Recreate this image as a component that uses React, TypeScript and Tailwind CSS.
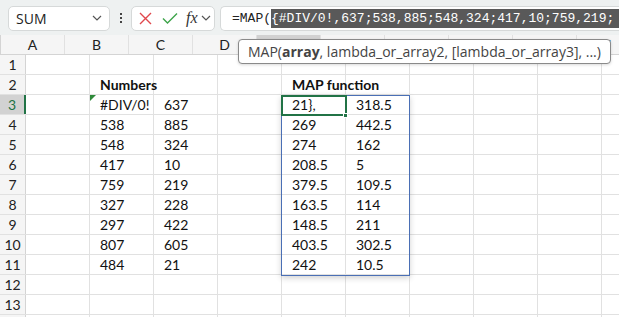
import React from "react";

const cols = ["A", "B", "C", "D", "E", "F", "G", "H", "I", "J"];

const data: Record<number, Record<string, string>> = {
	2: { B: "Numbers", E: "MAP function" },
	3: { B: "#DIV/0!", C: "637", E: "21},", F: "318.5" },
	4: { B: "538", C: "885", E: "269", F: "442.5" },
	5: { B: "548", C: "324", E: "274", F: "162" },
	6: { B: "417", C: "10", E: "208.5", F: "5" },
	7: { B: "759", C: "219", E: "379.5", F: "109.5" },
	8: { B: "327", C: "228", E: "163.5", F: "114" },
	9: { B: "297", C: "422", E: "148.5", F: "211" },
	10: { B: "807", C: "605", E: "403.5", F: "302.5" },
	11: { B: "484", C: "21", E: "242", F: "10.5" },
};

const Chevron = ({ className }: { className?: string }) => (
	<svg width="10" height="6" viewBox="0 0 10 6" className={className}>
		<path d="M1 1 L5 5 L9 1" fill="none" stroke="#555" strokeWidth="1.2" />
	</svg>
);

const Toolbar = () => (
	<div className="h-[35px] bg-[#eef1f1] flex items-center gap-0 pl-[8px] pt-[1px]">
		<div className="w-[102px] h-[25px] bg-white rounded-[5px] border border-[#d6d9d9] flex items-center justify-between px-[7px]">
			<span className="text-[14px] text-[#222]" style={{ fontFamily: "'Open Sans', sans-serif" }}>
				SUM
			</span>
			<Chevron />
		</div>
		<div className="w-[21px] flex flex-col items-center gap-[2px]">
			<span className="w-[2px] h-[2px] bg-[#444]" />
			<span className="w-[2px] h-[2px] bg-[#444]" />
			<span className="w-[2px] h-[2px] bg-[#444]" />
		</div>
		<div className="w-[84px] h-[25px] bg-white rounded-[5px] border border-[#d6d9d9] flex items-center pl-[7px]">
			<svg width="13" height="13" viewBox="0 0 13 13">
				<path d="M1 1 L12 12 M12 1 L1 12" stroke="#e0474c" strokeWidth="1.4" />
			</svg>
			<svg width="16" height="13" viewBox="0 0 16 13" className="ml-[10px]">
				<path d="M1 6.5 L5.5 11 L15 1.5" fill="none" stroke="#3ea44a" strokeWidth="1.4" />
			</svg>
			<span
				className="ml-[8px] italic text-[16px] text-[#333] leading-none"
				style={{ fontFamily: "'Liberation Serif', serif" }}
			>
				fx
			</span>
			<Chevron className="ml-[3px]" />
		</div>
		<div className="ml-[5px] flex-1 h-[25px] bg-white rounded-l-[5px] border border-r-0 border-[#d6d9d9] flex items-center pl-[11px] overflow-hidden whitespace-nowrap">
			<span
				className="text-[13px] text-[#222] leading-[19px]"
				style={{ fontFamily: "'Liberation Mono', monospace" }}
			>
				=MAP(
			</span>
			<span
				className="text-[13px] text-white bg-[#595959] leading-[19px] pr-[20px]"
				style={{ fontFamily: "'Liberation Mono', monospace" }}
			>
				{"{#DIV/0!,637;538,885;548,324;417,10;759,219;"}
			</span>
		</div>
	</div>
);

const HeaderRow = () => (
	<div className="flex h-[20px] bg-[#f5f5f5] border-b border-[#d4d4d4]">
		<div className="w-[26px] border-r border-[#d4d4d4] relative">
			<svg width="14" height="14" viewBox="0 0 14 14" className="absolute right-[3px] bottom-[2px]">
				<path d="M13 1 L13 13 L1 13 Z" fill="#c8c8c8" />
			</svg>
		</div>
		{cols.map((c) => (
			<div
				key={c}
				className={`w-[64px] shrink-0 border-r border-[#e1e1e1] flex items-center justify-center text-[14px] text-[#222] ${
					c === "E" ? "bg-[#d2d2d2] border-b-2 border-b-[#217346]" : ""
				}`}
			>
				{c}
			</div>
		))}
	</div>
);

const Row = ({ n }: { n: number }) => {
	const active = n === 3;
	return (
		<div className="flex h-[20px] border-b border-[#e1e1e1]">
			<div
				className={`w-[26px] shrink-0 flex items-center justify-center text-[14px] border-r ${
					active
						? "bg-[#d2d2d2] text-[#217346] border-r-2 border-r-[#217346]"
						: "bg-[#f5f5f5] text-[#222] border-[#d4d4d4]"
				}`}
			>
				{n <= 13 ? n : ""}
			</div>
			{cols.map((c) => {
				const v = data[n]?.[c];
				const bold = n === 2;
				return (
					<div
						key={c}
						className={`w-[64px] shrink-0 border-r border-[#e1e1e1] flex items-center pl-[10px] text-[14px] text-[#111] whitespace-nowrap relative ${
							bold ? "font-bold" : ""
						}`}
					>
						{n === 3 && c === "B" && (
							<svg width="6" height="6" viewBox="0 0 6 6" className="absolute left-0 top-0">
								<path d="M0 0 L6 0 L0 6 Z" fill="#2f8a3a" />
							</svg>
						)}
						{v}
					</div>
				);
			})}
		</div>
	);
};

export default function App() {
	const rows = Array.from({ length: 14 }, (_, i) => i + 1);
	return (
		<div
			className="w-[619px] h-[317px] overflow-hidden bg-white relative"
			style={{ fontFamily: "'Lato', 'Open Sans', sans-serif" }}
		>
			<Toolbar />
			<HeaderRow />
			{rows.map((n) => (
				<Row key={n} n={n} />
			))}

			{/* range border E3:F11 */}
			<div className="absolute left-[281px] top-[95px] w-[129px] h-[181px] border border-[#4a6fb5] shadow-[0_2px_6px_rgba(0,0,0,0.18)] pointer-events-none" />
			{/* active cell E3 */}
			<div className="absolute left-[281px] top-[95px] w-[66px] h-[21px] border-2 border-[#217346] pointer-events-none" />
			<div className="absolute left-[343px] top-[113px] w-[5px] h-[5px] bg-[#217346] border border-white" />

			{/* function tooltip */}
			<div
				className="absolute left-[238px] top-[39px] h-[25px] px-[9px] bg-white border border-[#8a8a8a] rounded-[4px] flex items-center text-[14px] text-[#444] whitespace-nowrap shadow-[0_1px_3px_rgba(0,0,0,0.15)]"
				style={{ fontFamily: "'Open Sans', sans-serif" }}
			>
				MAP(<span className="font-bold">array</span>, lambda_or_array2, [lambda_or_array3], ...)
			</div>
		</div>
	);
}
